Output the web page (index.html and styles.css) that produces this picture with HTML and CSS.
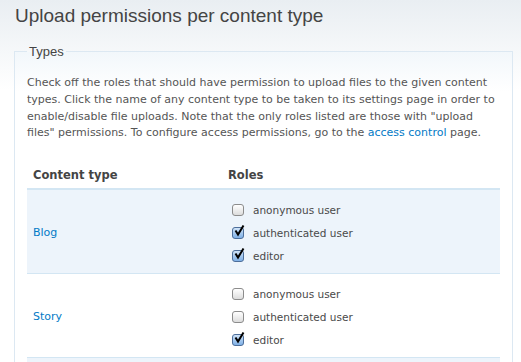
FILE: index.html
```html
<!DOCTYPE html>
<html lang="en">
<head>
    <meta charset="UTF-8">
    <meta name="viewport" content="width=device-width, initial-scale=1.0">
    <title>Upload permissions</title>
    <link rel="stylesheet" href="styles.css">
</head>
<body>
    <h1 class="title">Upload permissions per content type</h1>
    <fieldset class="types">
        <legend>Types</legend>
        <p class="description">Check off the roles that should have permission to upload files to the given content types. Click the name of any content type to be taken to its settings page in order to enable/disable file uploads. Note that the only roles listed are those with "upload files" permissions. To configure access permissions, go to the <a href="#">access control</a> page.</p>
        <table class="perm-table">
            <thead>
                <tr>
                    <th class="col-type">Content type</th>
                    <th>Roles</th>
                </tr>
            </thead>
            <tbody>
                <tr class="odd">
                    <td class="col-type"><a href="#">Blog</a></td>
                    <td>
                        <div class="role"><span class="check"></span>anonymous user</div>
                        <div class="role"><span class="check checked"><svg viewBox="0 0 12 12"><path d="M2.5 5.5 L5 9.5 L10.5 0.5" /></svg></span>authenticated user</div>
                        <div class="role"><span class="check checked"><svg viewBox="0 0 12 12"><path d="M2.5 5.5 L5 9.5 L10.5 0.5" /></svg></span>editor</div>
                    </td>
                </tr>
                <tr class="even">
                    <td class="col-type"><a href="#">Story</a></td>
                    <td>
                        <div class="role"><span class="check"></span>anonymous user</div>
                        <div class="role"><span class="check"></span>authenticated user</div>
                        <div class="role"><span class="check checked"><svg viewBox="0 0 12 12"><path d="M2.5 5.5 L5 9.5 L10.5 0.5" /></svg></span>editor</div>
                    </td>
                </tr>
                <tr class="odd">
                    <td class="col-type empty"></td>
                    <td class="empty"></td>
                </tr>
            </tbody>
        </table>
    </fieldset>
</body>
</html>
```

FILE: styles.css
```css
body {
    margin: 0;
    padding: 0 8px 0 14px;
    font-family: "DejaVu Sans", Verdana, sans-serif;
    font-size: 11px;
    color: #555;
    background: linear-gradient(#e9eef2, #ffffff 90px) no-repeat #fff;
    overflow: hidden;
    height: 362px;
}

a {
    color: #027ac6;
    text-decoration: none;
}

.title {
    margin: 0;
    padding: 4px 0 0 1px;
    font-family: "Liberation Sans", Arial, sans-serif;
    font-size: 19px;
    font-weight: normal;
    color: #444;
    line-height: 24px;
}

.types {
    margin: 16px 0 0;
    padding: 0 12px;
    width: 473px;
    border: 1px solid #dce8f2;
    background: linear-gradient(#f2f7fb, #ffffff 40px);
}

.types legend {
    padding: 0 2px;
    margin-left: 0;
    font-family: "Liberation Sans", Arial, sans-serif;
    font-size: 13px;
    color: #444;
}

.description {
    margin: 16px 0 26px;
    line-height: 16.8px;
}

.perm-table {
    width: 100%;
    border-collapse: collapse;
}

.perm-table th {
    text-align: left;
    font-size: 11.5px;
    font-weight: bold;
    color: #444;
    padding: 0 6px 6px;
    line-height: 14px;
    border-bottom: 2px solid #d3e6f3;
}

.perm-table td {
    padding: 8px 6px 6px;
    vertical-align: middle;
    border-bottom: 1px solid #d3e6f3;
}

.perm-table td.empty {
    height: 60px;
}

.col-type {
    width: 183px;
}

.perm-table tr.odd td {
    background: #edf4fb;
}

.perm-table tr.even td {
    background: #fff;
}

.role {
    display: flex;
    align-items: center;
    gap: 9px;
    height: 23px;
    padding-left: 4px;
    font-size: 10.5px;
    color: #494949;
}

.check {
    width: 10px;
    height: 10px;
    border: 1px solid #8c8c8c;
    border-radius: 3px;
    background: linear-gradient(#ffffff, #dcdcdc);
    position: relative;
    flex: none;
}

.check.checked {
    border-color: #4d6e9a;
    background: linear-gradient(#cfe3f8, #7fb0e6);
}

.check svg {
    position: absolute;
    left: 0;
    top: -3px;
    width: 12px;
    height: 12px;
    fill: none;
    stroke: #000;
    stroke-width: 2;
}
```
